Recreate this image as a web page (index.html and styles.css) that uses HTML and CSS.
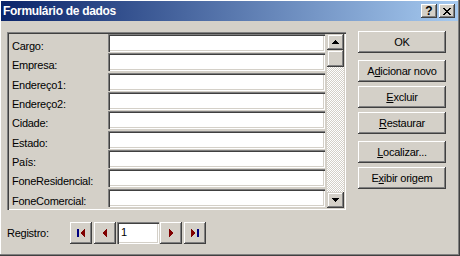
FILE: index.html
```html
<!DOCTYPE html>
<html lang="pt">
<head>
  <meta charset="UTF-8" />
  <title>Formulário de dados</title>
  <link rel="stylesheet" href="styles.css">
</head>
<body>
  <div class="window">
    <div class="titlebar">
      <span class="title">Formulário de dados</span>
      <div class="caption-buttons">
        <button class="caption-btn help">?</button>
        <button class="caption-btn close">
          <svg width="8" height="7" viewBox="0 0 8 7" shape-rendering="crispEdges">
            <path d="M0 0h2v1h-2zM6 0h2v1h-2zM1 1h2v1h-2zM5 1h2v1h-2zM2 2h4v1h-4zM3 3h2v1h-2zM2 4h4v1h-4zM1 5h2v1h-2zM5 5h2v1h-2zM0 6h2v1h-2zM6 6h2v1h-2z" fill="#000"/>
          </svg>
        </button>
      </div>
    </div>

    <div class="main">
      <div class="records">
        <div class="fields">
          <div class="row"><span class="label">Cargo:</span><div class="field"></div></div>
          <div class="row"><span class="label">Empresa:</span><div class="field"></div></div>
          <div class="row"><span class="label">Endereço1:</span><div class="field"></div></div>
          <div class="row"><span class="label">Endereço2:</span><div class="field"></div></div>
          <div class="row"><span class="label">Cidade:</span><div class="field"></div></div>
          <div class="row"><span class="label">Estado:</span><div class="field"></div></div>
          <div class="row"><span class="label">País:</span><div class="field"></div></div>
          <div class="row"><span class="label">FoneResidencial:</span><div class="field"></div></div>
          <div class="row"><span class="label">FoneComercial:</span><div class="field"></div></div>
        </div>
        <div class="scrollbar">
          <div class="sb-btn">
            <svg width="7" height="4" viewBox="0 0 7 4" shape-rendering="crispEdges"><path d="M3 0h1v1h-1zM2 1h3v1h-3zM1 2h5v1h-5zM0 3h7v1h-7z" fill="#000"/></svg>
          </div>
          <div class="sb-thumb"></div>
          <div class="sb-track"></div>
          <div class="sb-btn">
            <svg width="7" height="4" viewBox="0 0 7 4" shape-rendering="crispEdges"><path d="M0 0h7v1h-7zM1 1h5v1h-5zM2 2h3v1h-3zM3 3h1v1h-1z" fill="#000"/></svg>
          </div>
        </div>
      </div>

      <div class="actions">
        <button class="btn">OK</button>
        <button class="btn group">A<u>d</u>icionar novo</button>
        <button class="btn"><u>E</u>xcluir</button>
        <button class="btn"><u>R</u>estaurar</button>
        <button class="btn group"><u>L</u>ocalizar...</button>
        <button class="btn">E<u>x</u>ibir origem</button>
      </div>
    </div>

    <div class="footer">
      <span class="reg-label">Registro:</span>
      <div class="nav">
        <button class="nav-btn">
          <svg width="8" height="8" viewBox="0 0 8 8" shape-rendering="crispEdges">
            <rect x="0" y="0" width="2" height="8" fill="#000080"/>
            <path d="M7 0h1v8h-1zM6 1h1v6h-1zM5 2h1v4h-1zM4 3h1v2h-1z" fill="#800000"/>
          </svg>
        </button>
        <button class="nav-btn">
          <svg width="4" height="8" viewBox="0 0 4 8" shape-rendering="crispEdges">
            <path d="M3 0h1v8h-1zM2 1h1v6h-1zM1 2h1v4h-1zM0 3h1v2h-1z" fill="#800000"/>
          </svg>
        </button>
        <div class="nav-input">1</div>
        <button class="nav-btn">
          <svg width="4" height="8" viewBox="0 0 4 8" shape-rendering="crispEdges">
            <path d="M0 0h1v8h-1zM1 1h1v6h-1zM2 2h1v4h-1zM3 3h1v2h-1z" fill="#800000"/>
          </svg>
        </button>
        <button class="nav-btn">
          <svg width="8" height="8" viewBox="0 0 8 8" shape-rendering="crispEdges">
            <path d="M0 0h1v8h-1zM1 1h1v6h-1zM2 2h1v4h-1zM3 3h1v2h-1z" fill="#800000"/>
            <rect x="6" y="0" width="2" height="8" fill="#000080"/>
          </svg>
        </button>
      </div>
    </div>
  </div>
</body>
</html>
```

FILE: styles.css
```css
html, body {
  margin: 0;
  padding: 0;
}
body {
  width: 460px;
  height: 256px;
  overflow: hidden;
  background-color: #d4d0c8;
  font-family: "Liberation Sans", Arial, sans-serif;
  font-size: 11px;
  letter-spacing: -0.25px;
  color: #000;
}
.window {
  box-sizing: border-box;
  width: 460px;
  height: 256px;
  padding: 1px 2px 2px 1px;
  display: flex;
  flex-direction: column;
  box-shadow: inset -1px -1px #404040, inset -2px -2px #808080, inset 1px 1px #fff;
}

/* title bar */
.titlebar {
  height: 20px;
  flex-shrink: 0;
  padding: 0 3px 0 2px;
  display: flex;
  align-items: center;
  justify-content: space-between;
  background: linear-gradient(to right, #0a246a, #a6caf0);
}
.title {
  color: white;
  font-weight: bold;
  font-size: 12px;
  letter-spacing: -0.3px;
}
.caption-buttons {
  display: flex;
  gap: 2px;
}
.caption-btn {
  width: 16px;
  height: 14px;
  padding: 0;
  border: 0;
  background-color: #d4d0c8;
  display: flex;
  align-items: center;
  justify-content: center;
  font-family: "Liberation Sans", Arial, sans-serif;
  font-weight: bold;
  font-size: 12px;
  color: #000;
  box-shadow: inset -1px -1px #404040, inset 1px 1px #fff, inset -2px -2px #808080;
}

/* main area */
.main {
  display: flex;
  align-items: flex-start;
  padding: 11px 0 0 6px;
}
.records {
  box-sizing: border-box;
  width: 339px;
  height: 178px;
  padding: 2px;
  display: flex;
  gap: 2px;
  box-shadow: inset 1px 1px #808080, inset 2px 2px #404040, inset -1px -1px #fff, inset -2px -2px #d4d0c8;
}
.fields {
  width: 316px;
  display: grid;
  grid-template-rows: repeat(9, 1fr);
}
.row {
  display: flex;
}
.label {
  box-sizing: border-box;
  width: 99px;
  padding: 6px 0 0 3px;
  line-height: 13px;
  white-space: nowrap;
}
.field {
  width: 217px;
  height: 18px;
  background-color: white;
  box-shadow: inset 1px 1px #808080, inset 2px 2px #404040, inset -1px -1px #fff, inset -2px -2px #d4d0c8;
}

.scrollbar {
  width: 17px;
  display: flex;
  flex-direction: column;
}
.sb-btn, .sb-thumb {
  height: 16px;
  flex-shrink: 0;
  background-color: #d4d0c8;
  display: flex;
  align-items: center;
  justify-content: center;
  box-shadow: inset -1px -1px #404040, inset 1px 1px #d4d0c8, inset -2px -2px #808080, inset 2px 2px #fff;
}
.sb-thumb {
  height: 17px;
}
.sb-track {
  flex: 1;
  background-image: repeating-conic-gradient(#d4d0c8 0 25%, #fff 0 50%);
  background-size: 2px 2px;
}

/* buttons on the right */
.actions {
  margin: -1px 0 0 12px;
  display: flex;
  flex-direction: column;
  gap: 4px;
}
.btn {
  width: 88px;
  height: 22px;
  padding: 0;
  border: 0;
  background-color: #d4d0c8;
  font-family: "Liberation Sans", Arial, sans-serif;
  font-size: 11px;
  letter-spacing: -0.25px;
  color: #000;
  box-shadow: inset -1px -1px #404040, inset 1px 1px #fff, inset -2px -2px #808080, inset 2px 2px #d4d0c8;
}
.btn.group {
  margin-top: 3px;
}

/* record navigation */
.footer {
  display: flex;
  align-items: center;
  padding: 12px 0 0 6px;
}
.reg-label {
  width: 63px;
}
.nav {
  display: flex;
  gap: 2px;
}
.nav-btn {
  width: 22px;
  height: 22px;
  padding: 0;
  border: 0;
  background-color: #d4d0c8;
  display: flex;
  align-items: center;
  justify-content: center;
  box-shadow: inset -1px -1px #404040, inset 1px 1px #fff, inset -2px -2px #808080, inset 2px 2px #d4d0c8;
}
.nav-input {
  box-sizing: border-box;
  width: 42px;
  height: 22px;
  margin: 0 -1px;
  padding: 4px 0 0 4px;
  background-color: white;
  box-shadow: inset 1px 1px #808080, inset 2px 2px #404040, inset -1px -1px #fff, inset -2px -2px #d4d0c8;
}
```
